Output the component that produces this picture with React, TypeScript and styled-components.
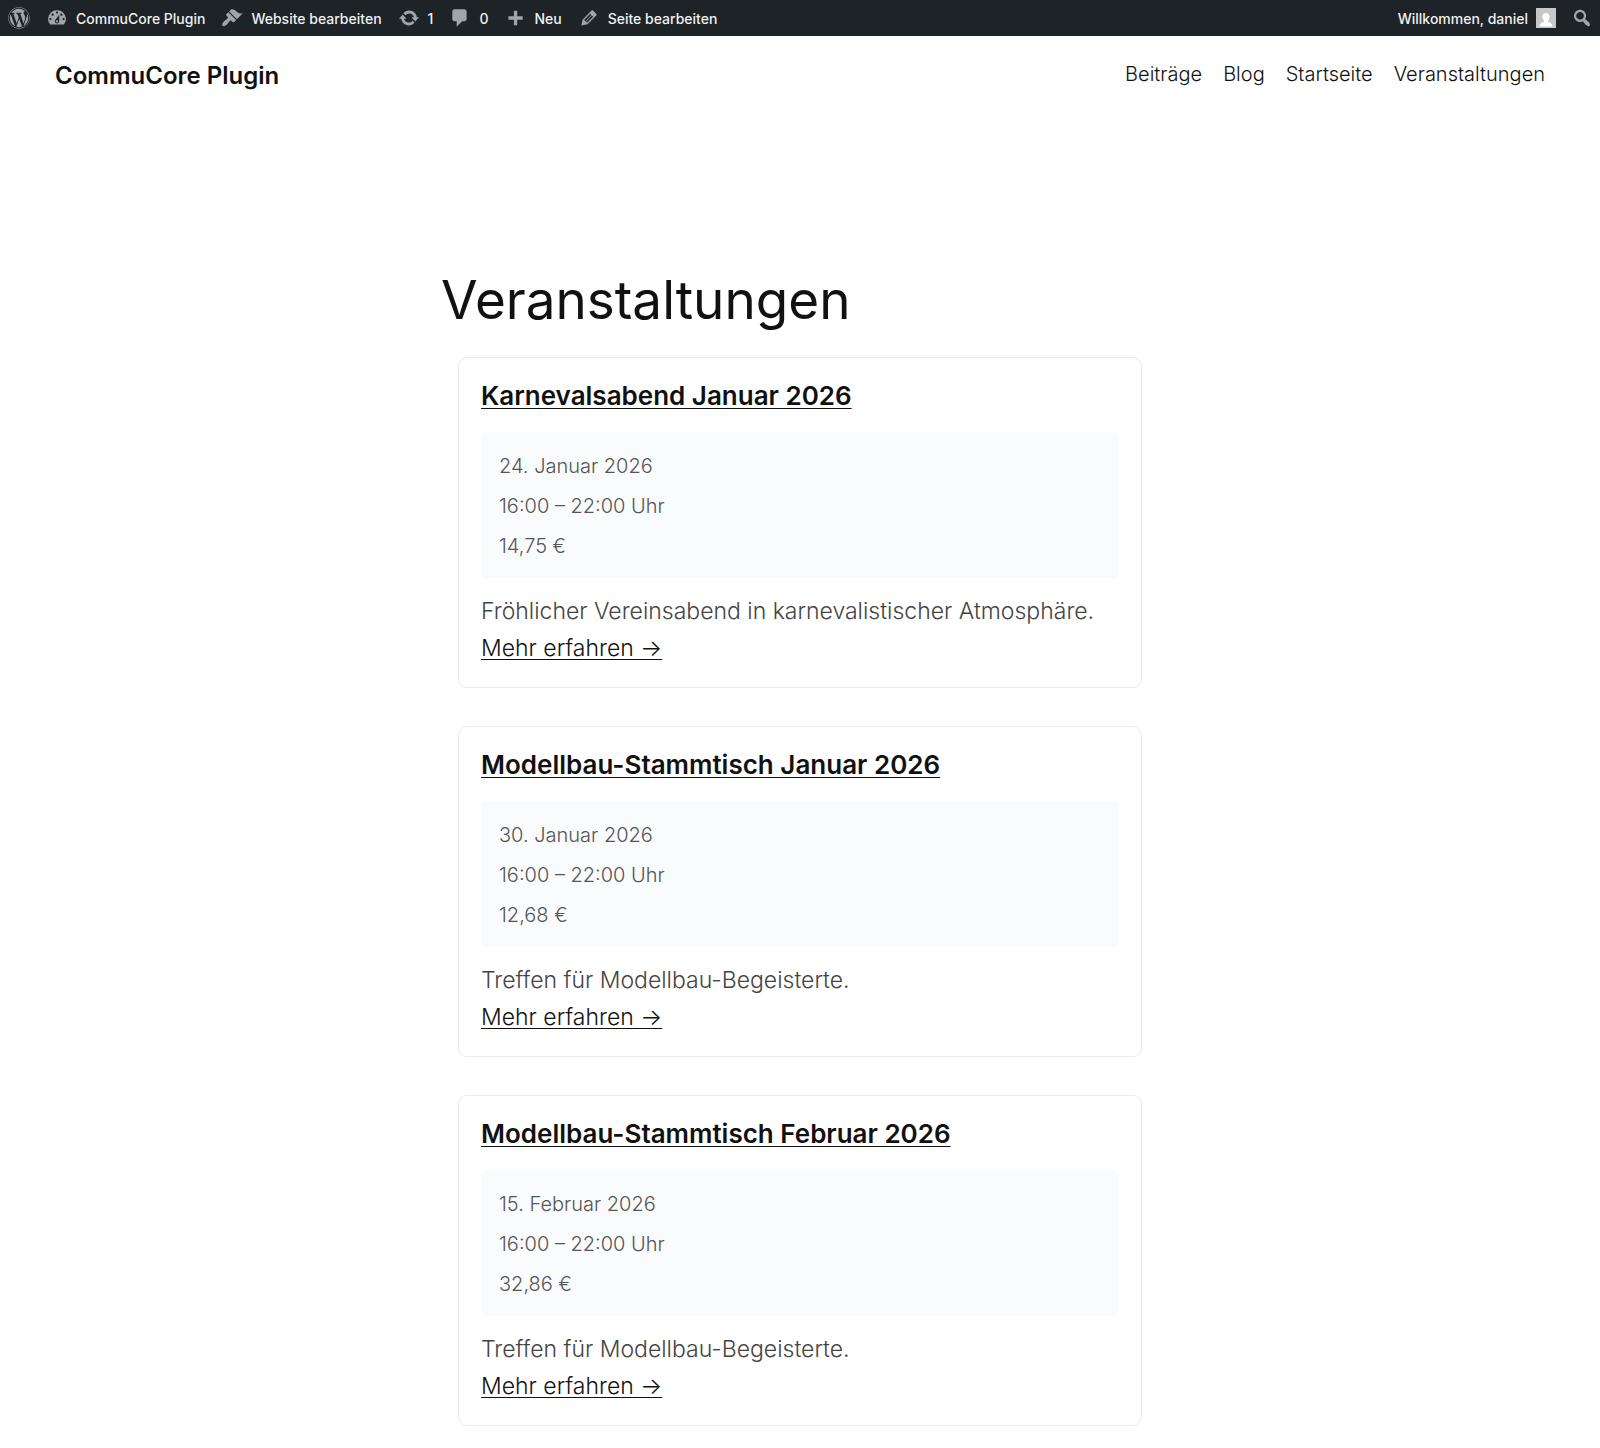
import React from 'react';
import styled, { createGlobalStyle } from 'styled-components';
import { FaWordpress } from 'react-icons/fa';

const GlobalStyle = createGlobalStyle`
  *, *::before, *::after { box-sizing: border-box; }
  body {
    margin: 0;
    background: #fff;
    color: #111;
    font-family: Inter, "Liberation Sans", sans-serif;
    font-weight: 350;
  }
  h1, h2, p, ul { margin: 0; padding: 0; }
  ul { list-style: none; }
  a { color: inherit; }
`;

const AdminBar = styled.nav`
  display: flex;
  justify-content: space-between;
  height: 36px;
  background: #1d2327;
  color: #f0f0f1;
  font-size: 14px;
  font-weight: 500;
`;

const AdminGroup = styled.ul`
  display: flex;
`;

const AdminLink = styled.a`
  display: flex;
  align-items: center;
  gap: 8px;
  height: 100%;
  padding: 0 8px;
  text-decoration: none;
  white-space: nowrap;
`;

const AdminButton = styled.button`
  display: flex;
  align-items: center;
  height: 100%;
  padding: 0 7px;
  border: 0;
  background: none;
`;

const IconSvg = styled.svg`
  flex: none;
  width: 22px;
  height: 22px;
  fill: #a0a5aa;
`;

const WordPressMark = styled(FaWordpress)`
  width: 22px;
  height: 22px;
  color: #a0a5aa;
`;

const Avatar = styled.svg`
  flex: none;
  width: 20px;
  height: 20px;
`;

const SiteHeader = styled.header`
  display: flex;
  align-items: flex-start;
  justify-content: space-between;
  padding: 21px 55px 22px;
`;

const SiteTitle = styled.a`
  font-size: 24px;
  font-weight: 600;
  line-height: 37px;
  text-decoration: none;
`;

const SiteNav = styled.nav`
  display: flex;
  gap: 21px;
  font-size: 20px;
  line-height: 35px;
`;

const NavLink = styled.a`
  text-decoration: none;
`;

const Main = styled.main`
  max-width: 718px;
  margin: 0 auto;
  padding: 154px 0 48px;
`;

const PageTitle = styled.h1`
  font-size: 53px;
  font-weight: 400;
  line-height: 60px;
`;

const EventList = styled.div`
  display: flex;
  flex-direction: column;
  gap: 38px;
  padding: 27px 17px 0;
`;

const EventCard = styled.article`
  padding: 22px 22px 20px;
  border: 1px solid #e9eaea;
  border-radius: 9px;
`;

const EventTitle = styled.h2`
  font-size: 26px;
  font-weight: 600;
  line-height: 32px;
`;

const TextLink = styled.a`
  text-decoration: underline;
  text-decoration-thickness: 1px;
  text-underline-offset: 3px;
`;

const EventMeta = styled.ul`
  margin-top: 20px;
  padding: 14px 18px 12px;
  border-radius: 5px;
  background: #f9fbfc;
  color: #555;
  font-size: 20px;
  line-height: 40px;
`;

const Excerpt = styled.p`
  margin-top: 15px;
  color: #444;
  font-size: 23px;
  line-height: 37px;
`;

const More = styled.p`
  font-size: 23px;
  line-height: 37px;
`;

const icons = {
  dashboard:
    'M3.76 16h12.48A7.998 7.998 0 0 0 10 3a7.998 7.998 0 0 0-6.24 13zM10 4c.55 0 1 .45 1 1s-.45 1-1 1-1-.45-1-1 .45-1 1-1zM6 6c.55 0 1 .45 1 1s-.45 1-1 1-1-.45-1-1 .45-1 1-1zm8 0c.55 0 1 .45 1 1s-.45 1-1 1-1-.45-1-1 .45-1 1-1zm-5.37 5.55L12 7v6c0 1.1-.9 2-2 2s-2-.9-2-2c0-.57.24-1.08.63-1.45zM4 10c.55 0 1 .45 1 1s-.45 1-1 1-1-.45-1-1 .45-1 1-1zm12 0c.55 0 1 .45 1 1s-.45 1-1 1-1-.45-1-1 .45-1 1-1zm-5 3c0-.55-.45-1-1-1s-1 .45-1 1 .45 1 1 1 1-.45 1-1z',
  brush:
    'M14.48 11.06L7.41 3.99l1.5-1.5c.5-.56 2.3-.47 3.51.32 1.21.8 1.43 1.28 2.91 2.1 1.18.64 2.45 1.26 4.45.85zm-.71.71L6.7 4.7 4.93 6.47c-.39.39-.39 1.02 0 1.41l1.06 1.06c.39.39.39 1.03 0 1.42-.6.6-1.43 1.11-2.21 1.69-.35.26-.7.53-1.01.84C1.43 14.23.4 16.08 1.4 17.07c.99 1 2.84-.03 4.18-1.36.31-.31.58-.66.85-1.02.57-.78 1.08-1.61 1.69-2.21.39-.39 1.02-.39 1.41 0l1.06 1.06c.39.39 1.02.39 1.41 0z',
  update:
    'M10.2 3.28c3.53 0 6.43 2.61 6.92 6h2.08l-3.5 4-3.5-4h2.32c-.45-1.97-2.21-3.45-4.32-3.45-1.45 0-2.73.71-3.54 1.78L4.95 5.66C6.23 4.2 8.11 3.28 10.2 3.28zm-.4 13.44c-3.52 0-6.43-2.61-6.92-6H.8l3.5-4c1.17 1.33 2.33 2.67 3.5 4H5.48c.45 1.97 2.21 3.45 4.32 3.45 1.45 0 2.73-.71 3.54-1.78l1.71 1.95c-1.28 1.46-3.15 2.38-5.25 2.38z',
  comment:
    'M5 2h9c1.1 0 2 .9 2 2v7c0 1.1-.9 2-2 2h-2l-5 5v-5H5c-1.1 0-2-.9-2-2V4c0-1.1.9-2 2-2z',
  plus: 'M17 8.500v3h-5v5H9v-5H4v-3h5v-5h3v5z',
  pencil:
    'M13.89 3.39l2.71 2.72c.46.46.42 1.24.03 1.64l-8.01 8.02-5.56 1.16 1.16-5.58s7.6-7.63 7.99-8.03c.39-.39 1.22-.39 1.68.07zm-2.73 2.79l-5.59 5.61 1.11 1.11 5.54-5.65zm-2.97 8.23l5.58-5.6-1.07-1.08-5.59 5.6z',
  search:
    'M12.14 4.18c1.87 1.87 2.11 4.75.72 6.89.12.1.22.21.36.31.2.16.47.36.81.59.34.24.56.39.66.47.42.31.73.57.94.78.32.32.6.65.84 1 .25.35.44.69.59 1.04.14.35.21.68.18 1-.02.32-.14.59-.36.81s-.49.34-.81.36c-.31.02-.65-.04-.99-.19-.35-.14-.7-.34-1.04-.59-.35-.24-.68-.52-1-.84-.21-.21-.47-.52-.77-.93-.1-.13-.25-.35-.47-.66-.22-.32-.4-.57-.56-.78-.16-.2-.29-.35-.44-.5-2.07 1.09-4.69.76-6.44-.98-2.14-2.15-2.14-5.64 0-7.78 2.15-2.15 5.63-2.15 7.78 0zm-1.41 6.36c1.36-1.37 1.36-3.58 0-4.95-1.37-1.37-3.59-1.37-4.95 0-1.37 1.37-1.37 3.58 0 4.95 1.36 1.37 3.58 1.37 4.95 0z',
};

type IconName = keyof typeof icons;

const Icon = ({ name }: { name: IconName }) => (
  <IconSvg viewBox="0 0 20 20" aria-hidden="true">
    <path d={icons[name]} />
  </IconSvg>
);

const adminItems: { icon: IconName; label: string }[] = [
  { icon: 'dashboard', label: 'CommuCore Plugin' },
  { icon: 'brush', label: 'Website bearbeiten' },
  { icon: 'update', label: '1' },
  { icon: 'comment', label: '0' },
  { icon: 'plus', label: 'Neu' },
  { icon: 'pencil', label: 'Seite bearbeiten' },
];

const navItems = ['Beiträge', 'Blog', 'Startseite', 'Veranstaltungen'];

interface ClubEvent {
  title: string;
  date: string;
  time: string;
  price: string;
  excerpt: string;
}

const events: ClubEvent[] = [
  {
    title: 'Karnevalsabend Januar 2026',
    date: '24. Januar 2026',
    time: '16:00 – 22:00 Uhr',
    price: '14,75 €',
    excerpt: 'Fröhlicher Vereinsabend in karnevalistischer Atmosphäre.',
  },
  {
    title: 'Modellbau-Stammtisch Januar 2026',
    date: '30. Januar 2026',
    time: '16:00 – 22:00 Uhr',
    price: '12,68 €',
    excerpt: 'Treffen für Modellbau-Begeisterte.',
  },
  {
    title: 'Modellbau-Stammtisch Februar 2026',
    date: '15. Februar 2026',
    time: '16:00 – 22:00 Uhr',
    price: '32,86 €',
    excerpt: 'Treffen für Modellbau-Begeisterte.',
  },
];

export default function App() {
  return (
    <>
      <GlobalStyle />
      <AdminBar>
        <AdminGroup>
          <li>
            <AdminLink href="#wordpress" aria-label="WordPress">
              <WordPressMark aria-hidden="true" />
            </AdminLink>
          </li>
          {adminItems.map(({ icon, label }) => (
            <li key={icon}>
              <AdminLink href={`#${icon}`}>
                <Icon name={icon} />
                {label}
              </AdminLink>
            </li>
          ))}
        </AdminGroup>
        <AdminGroup>
          <li>
            <AdminLink href="#profil">
              Willkommen, daniel
              <Avatar viewBox="0 0 20 20" aria-hidden="true">
                <rect width="20" height="20" fill="#c5c7ca" />
                <path
                  d="M10 5c2.2 0 3.6 1.6 3.6 3.8 0 1.7-.8 3.2-1.7 3.9v1c2.1.5 4.1 1.5 4.7 4.8H3.4c.6-3.3 2.6-4.3 4.7-4.8v-1C7.2 12 6.4 10.500 6.4 8.8 6.4 6.6 7.8 5 10 5z"
                  fill="#fff"
                />
              </Avatar>
            </AdminLink>
          </li>
          <li>
            <AdminButton type="button" aria-label="Suchen">
              <Icon name="search" />
            </AdminButton>
          </li>
        </AdminGroup>
      </AdminBar>
      <SiteHeader>
        <SiteTitle href="#start">CommuCore Plugin</SiteTitle>
        <SiteNav>
          {navItems.map((item) => (
            <NavLink key={item} href={`#${item.toLowerCase()}`}>
              {item}
            </NavLink>
          ))}
        </SiteNav>
      </SiteHeader>
      <Main>
        <PageTitle>Veranstaltungen</PageTitle>
        <EventList>
          {events.map((event) => (
            <EventCard key={event.title}>
              <EventTitle>
                <TextLink href="#termin">{event.title}</TextLink>
              </EventTitle>
              <EventMeta>
                <li>{event.date}</li>
                <li>{event.time}</li>
                <li>{event.price}</li>
              </EventMeta>
              <Excerpt>{event.excerpt}</Excerpt>
              <More>
                <TextLink href="#termin">Mehr erfahren →</TextLink>
              </More>
            </EventCard>
          ))}
        </EventList>
      </Main>
    </>
  );
}
